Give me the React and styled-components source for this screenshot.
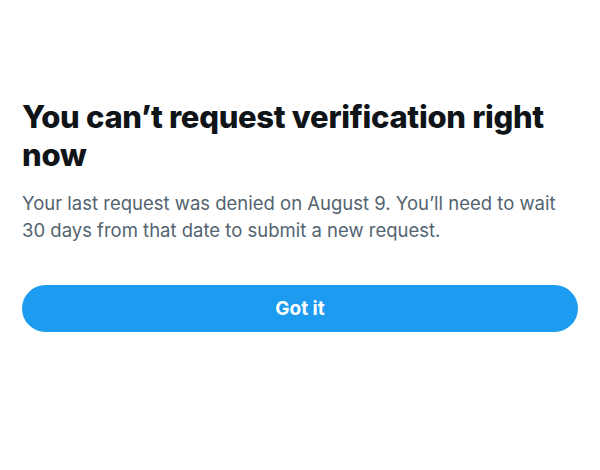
import React from "react";
import styled, { createGlobalStyle } from "styled-components";

const GlobalStyle = createGlobalStyle`
  html, body {
    margin: 0;
    padding: 0;
    background: #ffffff;
  }
  body {
    font-family: "Inter", "Roboto", "Liberation Sans", sans-serif;
  }
`;

const Page = styled.div`
  width: 600px;
  height: 470px;
  box-sizing: border-box;
  padding: 98px 22px 0 22px;
  display: flex;
  flex-direction: column;
`;

const Title = styled.h1`
  margin: 0;
  font-size: 31px;
  line-height: 38px;
  font-weight: 800;
  color: #0f1419;
  letter-spacing: -0.3px;
`;

const Body = styled.p`
  margin: 16px 0 0 0;
  font-size: 18.5px;
  line-height: 27px;
  font-weight: 400;
  color: #536471;
`;

const Button = styled.button`
  margin-top: 41px;
  width: 100%;
  height: 47px;
  border: none;
  border-radius: 24px;
  background: #1d9bf0;
  color: #ffffff;
  font-family: inherit;
  font-size: 19px;
  font-weight: 700;
  cursor: pointer;
`;

const App = () => {
  return (
    <>
      <GlobalStyle />
      <Page>
        <Title>You can’t request verification right now</Title>
        <Body>
          Your last request was denied on August 9. You’ll need to wait 30 days
          from that date to submit a new request.
        </Body>
        <Button>Got it</Button>
      </Page>
    </>
  );
};

export default App;
